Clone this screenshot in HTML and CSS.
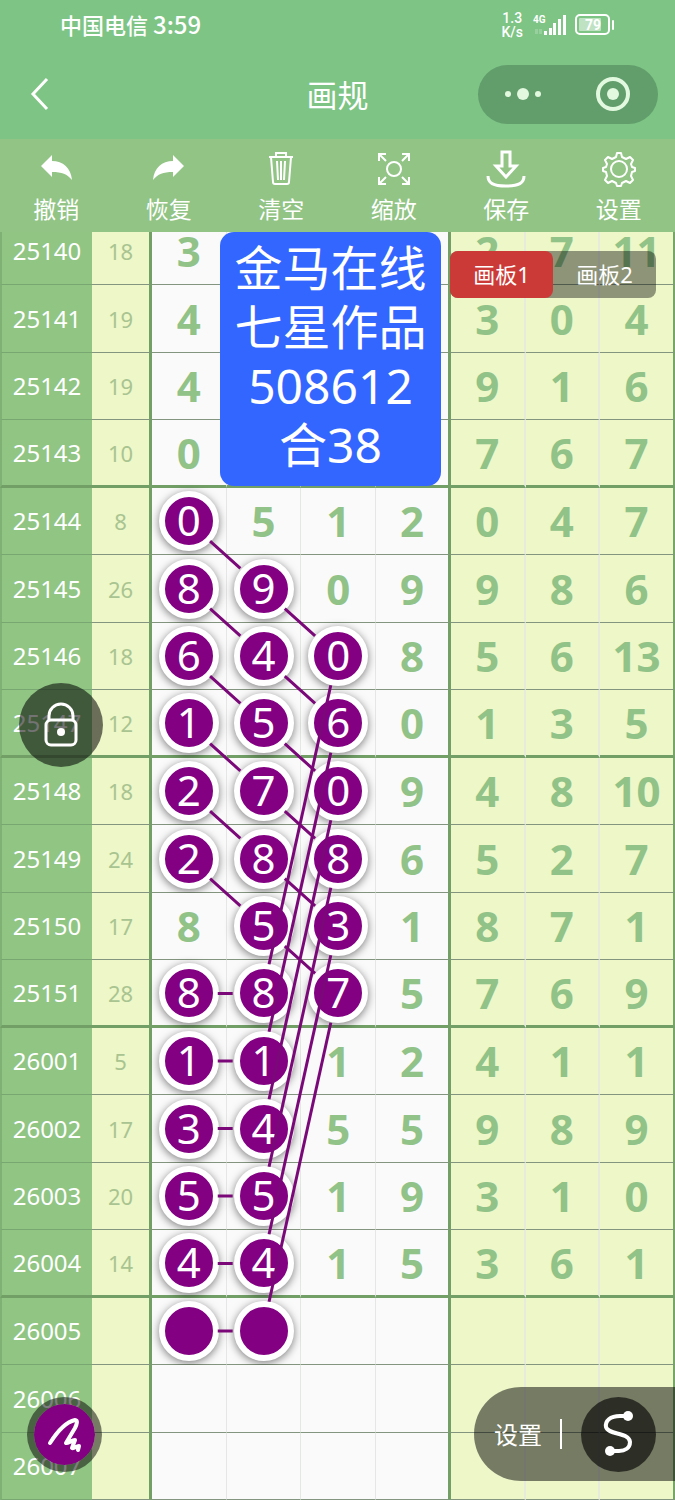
FILE: index.html
```
<!DOCTYPE HTML>
<html lang="zh-CN">
<head>
	<title>画规</title>
	<meta charset="utf-8" />
	<meta name="viewport" content="width=device-width" />
	<link rel="stylesheet" href="styles.css">
</head>
<body>
<div id="header">
	<div class="status">
		<div class="carrier">中国电信 <span class="clock">3:59</span></div>
		<div class="signals">
			<div class="speed">1.3<br />K/s</div>
			<svg width="34" height="24" viewBox="0 0 34 24">
				<text x="0" y="10" class="net">4G</text>
				<g fill="#fff"><rect x="11" y="18" width="3" height="4"/><rect x="16" y="15" width="3" height="7"/><rect x="20" y="10" width="3" height="12"/><rect x="25" y="6" width="3" height="16"/><rect x="30" y="2" width="3" height="20"/></g>
				<g fill="#fff" opacity=".2"><rect x="2" y="16" width="3" height="5"/><rect x="6" y="16" width="3" height="5"/></g>
			</svg>
			<svg width="40" height="22" viewBox="0 0 40 22">
				<rect x="1" y="1" width="33" height="19" rx="4" fill="none" stroke="#fff" stroke-width="2"/>
				<rect x="4" y="4" width="22" height="13" rx="1" fill="#fff" opacity=".5"/>
				<rect x="37" y="6" width="2" height="10" rx="1" fill="#fff"/>
				<text x="18" y="16" class="battery">79</text>
			</svg>
		</div>
	</div>
	<div class="nav">
		<button class="back" aria-label="返回">
			<svg width="20" height="34" viewBox="0 0 20 34"><path d="M17 2L3 17l14 15" fill="none" stroke="#fff" stroke-width="3"/></svg>
		</button>
		<h1>画规</h1>
		<div class="capsule">
			<button aria-label="更多"><svg width="38" height="14" viewBox="0 0 38 14" fill="#e2f8df"><circle cx="4" cy="7" r="3"/><circle cx="19" cy="7" r="6"/><circle cx="34" cy="7" r="3"/></svg></button>
			<button aria-label="关闭"><svg width="36" height="36" viewBox="0 0 36 36"><circle cx="18" cy="18" r="15" fill="none" stroke="#e2f8df" stroke-width="4"/><circle cx="18" cy="18" r="6" fill="#e2f8df"/></svg></button>
		</div>
	</div>
</div>
<div id="toolbar">
	<button>
		<svg width="40" height="40" viewBox="0 0 40 40"><path d="M5 17L16 6v6c11 0 19 7 20 19-5-6-10-8-20-8v5z" fill="#fff"/></svg>
		撤销
	</button>
	<button>
		<svg width="40" height="40" viewBox="0 0 40 40"><path d="M35 17L24 6v6c-11 0-19 7-20 19 5-6 10-8 20-8v5z" fill="#fff"/></svg>
		恢复
	</button>
	<button>
		<svg width="40" height="40" viewBox="0 0 40 40" fill="none" stroke="#fff" stroke-width="2"><path d="M8 8h24M15 8V4h10v4M10 8l2 25q0 2 2 2h12q2 0 2-2l2-25M16 12l1 19M20 12v19M24 12l-1 19"/></svg>
		清空
	</button>
	<button>
		<svg width="40" height="40" viewBox="0 0 40 40" fill="none" stroke="#fff" stroke-width="2"><circle cx="20" cy="20" r="7"/><path d="M5 12V5h7M5 5l7 7M28 5h7v7M35 5l-7 7M5 28v7h7M5 35l7-7M28 35h7v-7M35 35l-7-7"/></svg>
		缩放
	</button>
	<button>
		<svg width="40" height="40" viewBox="0 0 40 40" fill="none" stroke="#fff" stroke-width="3"><path d="M16 3h8v14h6L20 28 10 17h6zM2 27c0 7 5 10 18 10s18-3 18-10"/></svg>
		保存
	</button>
	<button>
		<svg width="40" height="40" viewBox="0 0 40 40" fill="none" stroke="#fff" stroke-width="2"><circle cx="20" cy="20" r="8"/><path d="M17 8l1-4h4l1 4 4 2 4-2 3 3-2 4 1 3 3 1v3l-3 1-1 4 2 4-3 3-4-2-4 2-1 3h-4l-1-3-4-2-4 2-3-3 2-4-1-4-3-1v-3l3-1 1-3-2-4 3-3 4 2z" stroke-linejoin="round"/></svg>
		设置
	</button>
</div>
<div id="board">
	<div class="sheet">
		<table>
			<colgroup><col class="period"><col class="sum"><col span="7"></colgroup>
			<tbody id="rows"></tbody>
		</table>
		<svg id="links" viewBox="0 0 225 1283" preserveAspectRatio="none"></svg>
	</div>
	<div class="note">金马在线<br />七星作品<br />508612<br />合38</div>
	<div class="tabs"><button class="on">画板1</button><button>画板2</button></div>
	<button class="lock" aria-label="锁定">
		<svg width="36" height="46" viewBox="0 0 36 46" fill="none" stroke="#fff" stroke-width="3"><rect x="3" y="18" width="30" height="25" rx="5"/><path d="M6 18v-4a12 12 0 0 1 24 0v4"/><circle cx="18" cy="30" r="4" fill="#fff" stroke="none"/></svg>
	</button>
	<button class="pen" aria-label="画笔">
		<svg width="38" height="38" viewBox="0 0 38 38" fill="none" stroke="#fff" stroke-width="4" stroke-linecap="round" stroke-linejoin="round"><path d="M4 27C11 16 20 6 29 4c3 0 2 4 0 8L20 27c1 1 6-3 9-3l-3 8c2 1 4-2 7-2l-1 4"/></svg>
	</button>
	<div class="dock">
		<button class="set">设置</button>
		<button class="curve" aria-label="曲线">
			<svg width="32" height="48" viewBox="0 0 32 48"><path d="M26 6H17C7 6 2 11 3 17c2 8 23 5 24 15 0 6-5 9-11 9H8" fill="none" stroke="#fff" stroke-width="4"/><circle cx="25" cy="6" r="5" fill="#fff"/><circle cx="7" cy="41" r="5" fill="#fff"/></svg>
		</button>
	</div>
</div>
<script type="text/javascript" src="script.js"></script>
</body>
</html>
```

FILE: styles.css
```
*{
	box-sizing: border-box;
}
body{
	font-family: "Noto Sans", "Noto Sans CJK SC", sans-serif;
	margin: 0px;
	display: flex;
	flex-direction: column;
	min-height: 100vh;
	color: white;
}
button{
	font: inherit;
	color: inherit;
	background: none;
	border: none;
	margin: 0px;
	padding: 0px;
}
svg{
	display: block;
}
#header{
	background-color: #7dc485;
	height: 139px;
}
.status{
	display: flex;
	justify-content: space-between;
	align-items: center;
	height: 49px;
	padding: 0px 60px;
}
.carrier{
	font-family: "Noto Sans CJK SC", sans-serif;
	font-size: 22px;
	line-height: 32px;
	padding-bottom: 2px;
	font-weight: 500;
}
.clock{
	font-size: 24px;
}
.signals{
	display: flex;
	align-items: center;
	gap: 8px;
}
.speed{
	font: 500 14px/14px Roboto, sans-serif;
	text-align: center;
	padding-right: 2px;
}
.net{
	font: bold 10px Roboto, sans-serif;
	fill: #fff;
}
.battery{
	font: bold 14px Roboto, sans-serif;
	text-anchor: middle;
	fill: #fff;
}
.nav{
	position: relative;
	display: flex;
	align-items: center;
	justify-content: center;
	height: 90px;
}
.nav h1{
	margin: 0px;
	font-size: 31px;
	line-height: 40px;
	font-weight: normal;
	font-family: "Noto Sans CJK SC", sans-serif;
}
.back{
	position: absolute;
	left: 30px;
}
.capsule{
	position: absolute;
	right: 17px;
	width: 180px;
	height: 59px;
	border-radius: 30px;
	background-color: #629d6c;
	display: flex;
}
.capsule button{
	flex: 1;
	display: flex;
	align-items: center;
	justify-content: center;
}
#toolbar{
	position: relative;
	z-index: 1;
	display: flex;
	height: 93px;
	background-color: #91c485;
}
#toolbar button{
	flex: 1;
	display: flex;
	flex-direction: column;
	align-items: center;
	gap: 4px;
	padding-top: 10px;
	font-size: 23px;
	line-height: 32px;
}
#board{
	position: relative;
	flex: 1;
	overflow: hidden;
}
/* first row is scrolled a little under the toolbar */
.sheet{
	position: relative;
	margin-top: -14px;
	margin-bottom: -1px;
}
table{
	width: 100%;
	table-layout: fixed;
	border-spacing: 0px;
	color: #91c287;
	text-align: center;
}
.period{
	width: 92px;
}
.sum{
	width: 60px;
}
tr{
	height: 67px;
}
tr:nth-child(even){
	height: 68px;
}
td, th{
	padding: 0px;
	line-height: 60px;
	font-size: 42px;
	font-weight: bold;
	background-color: #fafafa;
	border-bottom: 1px solid #84957f;
	border-right: 1px solid #e4e7e4;
}
th{
	background-color: #90c584;
	color: white;
	font-size: 24px;
	font-weight: normal;
	border-right: none;
	border-left: 2px solid #7fb175;
	border-bottom-color: #78a771;
}
td:nth-child(2){
	font-size: 22px;
	font-weight: normal;
	color: #a9c490;
}
td:nth-child(2), td:nth-child(n+7){
	background-color: #edf7c8;
}
td:nth-child(n+7){
	border-right: 2px solid #e6ebdc;
}
td:nth-child(2), td:nth-child(6){
	border-right: 3px solid #719f66;
}
td:last-child{
	border-right: 2px solid #76a46b;
}
.thick td, .thick th{
	border-bottom: 3px solid #719f66;
}
.ball{
	display: block;
	width: 60px;
	height: 60px;
	margin: 0px auto;
	border: 6px solid white;
	border-radius: 50%;
	background-color: #830083;
	box-shadow: 0px 2px 9px rgba(0,0,0,.5);
	color: white;
	font-weight: normal;
	line-height: 46px;
}
#links{
	position: absolute;
	top: 0px;
	left: 151px;
	width: calc((100% - 152px) / 7 * 3);
	height: 1283px;
	stroke: #7a0878;
	stroke-width: 3px;
}
.note{
	position: absolute;
	top: 0px;
	left: 220px;
	width: 221px;
	padding: 6px 0px 12px;
	border-radius: 14px;
	background-color: #3366ff;
	text-align: center;
	font-size: 48px;
	line-height: 59px;
}
.tabs{
	position: absolute;
	top: 19px;
	right: 19px;
	display: flex;
	width: 206px;
	height: 47px;
	border-radius: 8px;
	background-color: rgba(0,0,0,.4);
	font-size: 22px;
}
.tabs button{
	flex: 1;
	border-radius: 8px;
	padding-bottom: 4px;
}
.tabs .on{
	background-color: #cc3a38;
}
.lock, .pen, .curve{
	display: flex;
	align-items: center;
	justify-content: center;
	border-radius: 50%;
}
.lock{
	position: absolute;
	top: 451px;
	left: 19px;
	width: 84px;
	height: 84px;
	background-color: rgba(0,0,0,.55);
}
.pen{
	position: absolute;
	bottom: 28px;
	left: 27px;
	width: 75px;
	height: 75px;
	border: 7px solid rgba(0,0,0,.5);
	background-color: #830083;
	background-clip: padding-box;
}
.dock{
	position: absolute;
	right: 0px;
	bottom: 19px;
	display: flex;
	align-items: center;
	height: 94px;
	padding: 0px 19px 0px 20px;
	border-radius: 47px 0px 0px 47px;
	background-color: rgba(0,0,0,.5);
	font-size: 24px;
}
.set{
	width: 68px;
	height: 30px;
	line-height: 32px;
	text-align: left;
	border-right: 2px solid white;
	margin-right: 19px;
}
.curve{
	width: 75px;
	height: 75px;
	background-color: rgba(0,0,0,.62);
}
```

FILE: script.js
```
// period, sum, four drawn digits, three derived digits
var rows = [
	["25140", 18, 3, "", "", "", 2, 7, 11],
	["25141", 19, 4, "", "", "", 3, 0, 4],
	["25142", 19, 4, "", "", "", 9, 1, 6],
	["25143", 10, 0, "", "", "", 7, 6, 7],
	["25144", 8, 0, 5, 1, 2, 0, 4, 7],
	["25145", 26, 8, 9, 0, 9, 9, 8, 6],
	["25146", 18, 6, 4, 0, 8, 5, 6, 13],
	["25147", 12, 1, 5, 6, 0, 1, 3, 5],
	["25148", 18, 2, 7, 0, 9, 4, 8, 10],
	["25149", 24, 2, 8, 8, 6, 5, 2, 7],
	["25150", 17, 8, 5, 3, 1, 8, 7, 1],
	["25151", 28, 8, 8, 7, 5, 7, 6, 9],
	["26001", 5, 1, 1, 1, 2, 4, 1, 1],
	["26002", 17, 3, 4, 5, 5, 9, 8, 9],
	["26003", 20, 5, 5, 1, 9, 3, 1, 0],
	["26004", 14, 4, 4, 1, 5, 3, 6, 1],
	["26005", "", "", "", "", "", "", "", ""],
	["26006", "", "", "", "", "", "", "", ""],
	["26007", "", "", "", "", "", "", "", ""]
];

// [row, column, row, column]
var links = [];
for (var i = 4; i < 10; i++) {
	links.push([i, 0, i + 1, 1]);
	links.push([i + 1, 1, i + 2, 2]);
	links.push([i + 2, 2, i + 7, 1]);
}
for (var i = 11; i < 17; i++) links.push([i, 0, i, 1]);

var marked = {};
links.forEach(function(l) {
	marked[l[0] + "-" + l[1]] = true;
	marked[l[2] + "-" + l[3]] = true;
});

var html = "";
rows.forEach(function(row, r) {
	html += "<tr" + (r % 4 == 3 ? " class=\"thick\"" : "") + "><th scope=\"row\">" + row[0] + "</th>";
	for (var c = 1; c < row.length; c++) {
		html += "<td>" + (marked[r + "-" + (c - 2)] ? "<span class=\"ball\">" + row[c] + "</span>" : row[c]) + "</td>";
	}
	html += "</tr>";
});
document.getElementById("rows").innerHTML = html;

// every line stops at the edge of the two balls
var lines = "";
links.forEach(function(l) {
	var x1 = 37 + l[1] * 75, y1 = 33 + l[0] * 67.5;
	var x2 = 37 + l[3] * 75, y2 = 33 + l[2] * 67.5;
	var len = Math.sqrt((x2 - x1) * (x2 - x1) + (y2 - y1) * (y2 - y1));
	var dx = (x2 - x1) / len * 30, dy = (y2 - y1) / len * 30;
	lines += "<line x1=\"" + (x1 + dx) + "\" y1=\"" + (y1 + dy) + "\" x2=\"" + (x2 - dx) + "\" y2=\"" + (y2 - dy) + "\" />";
});
document.getElementById("links").innerHTML = lines;
```
